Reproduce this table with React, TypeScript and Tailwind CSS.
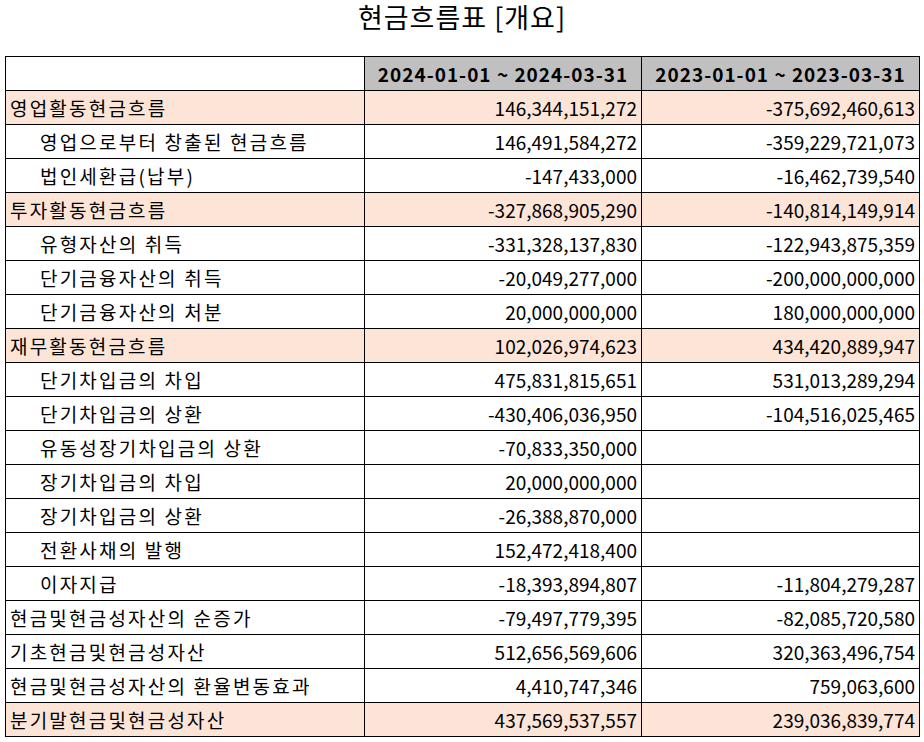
import React from "react";

type Row = { label: string; a: string; b: string; indent?: boolean; hl?: boolean };

const rows: Row[] = [
  { label: "영업활동현금흐름", a: "146,344,151,272", b: "-375,692,460,613", hl: true },
  { label: "영업으로부터 창출된 현금흐름", a: "146,491,584,272", b: "-359,229,721,073", indent: true },
  { label: "법인세환급(납부)", a: "-147,433,000", b: "-16,462,739,540", indent: true },
  { label: "투자활동현금흐름", a: "-327,868,905,290", b: "-140,814,149,914", hl: true },
  { label: "유형자산의 취득", a: "-331,328,137,830", b: "-122,943,875,359", indent: true },
  { label: "단기금융자산의 취득", a: "-20,049,277,000", b: "-200,000,000,000", indent: true },
  { label: "단기금융자산의 처분", a: "20,000,000,000", b: "180,000,000,000", indent: true },
  { label: "재무활동현금흐름", a: "102,026,974,623", b: "434,420,889,947", hl: true },
  { label: "단기차입금의 차입", a: "475,831,815,651", b: "531,013,289,294", indent: true },
  { label: "단기차입금의 상환", a: "-430,406,036,950", b: "-104,516,025,465", indent: true },
  { label: "유동성장기차입금의 상환", a: "-70,833,350,000", b: "", indent: true },
  { label: "장기차입금의 차입", a: "20,000,000,000", b: "", indent: true },
  { label: "장기차입금의 상환", a: "-26,388,870,000", b: "", indent: true },
  { label: "전환사채의 발행", a: "152,472,418,400", b: "", indent: true },
  { label: "이자지급", a: "-18,393,894,807", b: "-11,804,279,287", indent: true },
  { label: "현금및현금성자산의 순증가", a: "-79,497,779,395", b: "-82,085,720,580" },
  { label: "기초현금및현금성자산", a: "512,656,569,606", b: "320,363,496,754" },
  { label: "현금및현금성자산의 환율변동효과", a: "4,410,747,346", b: "759,063,600" },
  { label: "분기말현금및현금성자산", a: "437,569,537,557", b: "239,036,839,774", hl: true },
];

export default function App() {
  return (
    <div
      className="w-[924px] h-[742px] bg-white text-black overflow-hidden"
      style={{ fontFamily: '"Noto Sans CJK KR", "Noto Sans", sans-serif' }}
    >
      <div className="h-[56px] flex justify-center items-start">
        <h1 className="text-[27px] leading-[34px] font-normal tracking-[1px]">현금흐름표 [개요]</h1>
      </div>
      <table className="ml-[5px] w-[914px] border-collapse table-fixed text-[19px]">
        <colgroup>
          <col className="w-[359px]" />
          <col className="w-[277px]" />
          <col className="w-[278px]" />
        </colgroup>
        <thead>
          <tr className="h-[34px]">
            <th className="border border-black p-0"></th>
            <th className="border border-black bg-[#c0c0c0] font-bold text-center p-0 leading-[32px] tracking-[1px] whitespace-nowrap">
              2024-01-01 ~ 2024-03-31
            </th>
            <th className="border border-black bg-[#c0c0c0] font-bold text-center p-0 leading-[32px] tracking-[1px] whitespace-nowrap">
              2023-01-01 ~ 2023-03-31
            </th>
          </tr>
        </thead>
        <tbody>
          {rows.map((r, i) => (
            <tr key={i} className={"h-[34px] " + (r.hl ? "bg-[#fce4d6]" : "")}>
              <td
                className={
                  "border border-black py-0 pr-1 leading-[32px] whitespace-nowrap tracking-[2.2px] " +
                  (r.indent ? "pl-[34px]" : "pl-[4px]")
                }
              >
                {r.label}
              </td>
              <td className="border border-black py-0 pr-[4px] text-right leading-[32px] whitespace-nowrap">{r.a}</td>
              <td className="border border-black py-0 pr-[4px] text-right leading-[32px] whitespace-nowrap">{r.b}</td>
            </tr>
          ))}
        </tbody>
      </table>
    </div>
  );
}
